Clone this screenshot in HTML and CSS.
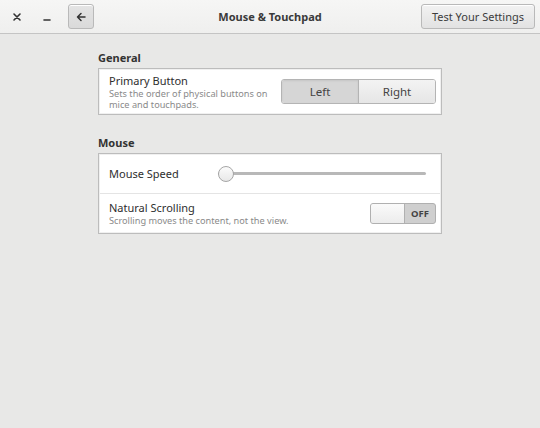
FILE: index.html
```html
<!DOCTYPE html>
<html>
<head>
<meta charset="utf-8">
<link rel="stylesheet" href="styles.css">
</head>
<body>
<div class="window">
  <header class="headerbar">
    <div class="hb-left">
      <span class="wbtn close">
        <svg width="10" height="10" viewBox="0 0 10 10"><path d="M2 2 L8 8 M8 2 L2 8" stroke="#333" stroke-width="1.6" stroke-linecap="round"/></svg>
      </span>
      <span class="wbtn min">
        <svg width="10" height="10" viewBox="0 0 10 10"><path d="M2 7 H8" stroke="#333" stroke-width="1.6" stroke-linecap="round"/></svg>
      </span>
      <button class="btn back">
        <svg width="12" height="12" viewBox="0 0 12 12"><path d="M10 6 H2.5 M6 2.5 L2.5 6 L6 9.5" stroke="#333" stroke-width="1.5" fill="none" stroke-linecap="round" stroke-linejoin="round"/></svg>
      </button>
    </div>
    <div class="title">Mouse &amp; Touchpad</div>
    <button class="btn test">Test Your Settings</button>
  </header>
  <main class="content">
    <h2 class="section-title">General</h2>
    <div class="frame">
      <div class="row row-primary">
        <div class="labels">
          <div class="label">Primary Button</div>
          <div class="sub">Sets the order of physical buttons on<br>mice and touchpads.</div>
        </div>
        <div class="segmented">
          <span class="seg active">Left</span>
          <span class="seg">Right</span>
        </div>
      </div>
    </div>
    <h2 class="section-title mouse">Mouse</h2>
    <div class="frame">
      <div class="row row-speed">
        <div class="label">Mouse Speed</div>
        <div class="slider">
          <div class="track"></div>
          <div class="knob"></div>
        </div>
      </div>
      <div class="sep"></div>
      <div class="row row-scroll">
        <div class="labels">
          <div class="label">Natural Scrolling</div>
          <div class="sub">Scrolling moves the content, not the view.</div>
        </div>
        <div class="switch">
          <span class="handle"></span>
          <span class="off">OFF</span>
        </div>
      </div>
    </div>
  </main>
</div>
</body>
</html>
```

FILE: styles.css
```css
html, body {
  margin: 0;
  padding: 0;
}
body {
  width: 540px;
  height: 428px;
  background: #e8e8e7;
  font-family: "Noto Sans", "Open Sans", sans-serif;
  color: #3c3c3c;
  overflow: hidden;
}
.window {
  width: 540px;
  height: 428px;
}
.headerbar {
  height: 33px;
  border-bottom: 1px solid #c4c4c4;
  background: linear-gradient(#f6f6f5, #efefee);
  display: flex;
  align-items: center;
  padding: 0 5px 0 0;
}
.hb-left {
  display: flex;
  align-items: center;
}
.wbtn {
  width: 30px;
  height: 30px;
  display: flex;
  align-items: center;
  justify-content: center;
}
.wbtn.close {
  margin-left: 2px;
}
.wbtn.min {
  padding-top: 2px;
  box-sizing: border-box;
}
.btn {
  font-family: inherit;
  border: 1px solid #b9b9b9;
  border-radius: 3px;
  background: linear-gradient(#f2f2f2, #e2e2e2);
  box-shadow: inset 0 1px 0 #fff;
  height: 25px;
  box-sizing: border-box;
  padding: 0;
  display: flex;
  align-items: center;
  justify-content: center;
  color: #3c3c3c;
}
.btn.back {
  width: 26px;
  margin-left: 6px;
  background: linear-gradient(#e4e4e4, #dadada);
}
.title {
  flex: 1;
  text-align: center;
  font-weight: bold;
  font-size: 11px;
  color: #3a3a3a;
  padding-left: 25px;
}
.btn.test {
  width: 114px;
  font-size: 11px;
}
.content {
  width: 344px;
  margin: 0 auto;
  padding-top: 16px;
  display: flex;
  flex-direction: column;
}
.section-title {
  margin: 0 0 2px 0;
  font-size: 11px;
  line-height: 16px;
  font-weight: bold;
  color: #333;
}
.section-title.mouse {
  margin-top: 20px;
}
.frame {
  background: #ffffff;
  border: 1px solid #bcbcbc;
  box-shadow: inset 0 0 0 1px #f0f0f0;
  display: flex;
  flex-direction: column;
}
.row {
  display: flex;
  align-items: center;
  padding: 0 5px 0 10px;
}
.row-primary {
  height: 45px;
}
.row-speed,
.row-scroll {
  height: 39px;
}
.sep {
  height: 1px;
  background: #e4e4e4;
  margin: 0 1px;
}
.labels {
  display: flex;
  flex-direction: column;
}
.label {
  font-size: 11px;
  line-height: 14px;
  color: #2e2e2e;
}
.sub {
  font-size: 9.2px;
  line-height: 11px;
  color: #8a8a8a;
}
.segmented {
  margin-left: auto;
  display: flex;
  width: 155px;
  height: 25px;
  border: 1px solid #b4b4b4;
  border-radius: 3px;
  box-sizing: border-box;
  overflow: hidden;
}
.seg {
  flex: 1;
  display: flex;
  align-items: center;
  justify-content: center;
  font-size: 11.5px;
  background: linear-gradient(#f3f3f3, #e6e6e6);
  color: #444;
}
.seg.active {
  background: #d6d6d6;
  border-right: 1px solid #b4b4b4;
  box-shadow: inset 0 1px 2px rgba(0,0,0,0.08);
}
.slider {
  margin-left: auto;
  margin-right: 10px;
  width: 208px;
  height: 16px;
  position: relative;
  display: flex;
  align-items: center;
}
.track {
  width: 100%;
  height: 3px;
  border-radius: 2px;
  background: #b8b8b8;
}
.knob {
  position: absolute;
  left: 0;
  top: 0;
  width: 14px;
  height: 14px;
  border-radius: 50%;
  border: 1px solid #a6a6a6;
  background: linear-gradient(#fbfbfb, #e8e8e8);
}
.switch {
  margin-left: auto;
  width: 66px;
  height: 21px;
  box-sizing: border-box;
  border: 1px solid #b0b0b0;
  border-radius: 3px;
  display: flex;
  overflow: hidden;
  background: #cfcfcf;
}
.handle {
  width: 33px;
  background: linear-gradient(#fafafa, #ececec);
  border-right: 1px solid #b0b0b0;
}
.off {
  flex: 1;
  display: flex;
  align-items: center;
  justify-content: center;
  font-size: 9.5px;
  font-weight: bold;
  color: #444;
}
```
